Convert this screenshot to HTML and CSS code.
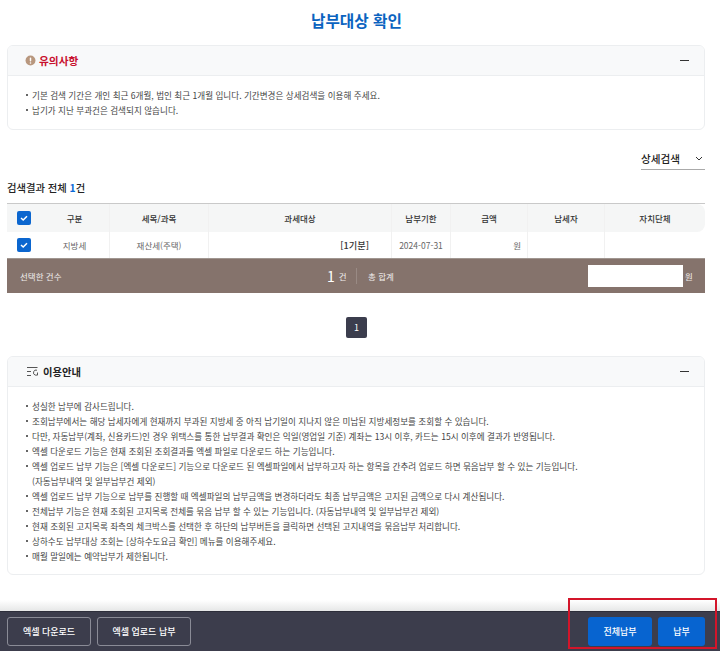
FILE: index.html
```html
<!DOCTYPE html>
<html lang="ko">
    <head>
        <meta charset="utf-8">
        <meta name="viewport" content="width=device-width, initial-scale=1.0">
        <title>납부대상 확인</title>
        <link rel="stylesheet" href="styles.css">
    </head>
    <body>
        <div class="page">
            <h1 class="title">납부대상 확인</h1>

            <div class="panel notice">
                <div class="panel-head">
                    <div class="panel-title red">
                        <svg class="icon" viewBox="0 0 12 12"><circle cx="6" cy="6" r="5.4" fill="#b8977e"/><rect x="5.2" y="2.6" width="1.6" height="4.4" rx=".7" fill="#fff"/><circle cx="6" cy="8.7" r=".9" fill="#fff"/></svg>
                        유의사항
                    </div>
                    <span class="fold"></span>
                </div>
                <ul class="panel-list">
                    <li>기본 검색 기간은 개인 최근 6개월, 법인 최근 1개월 입니다. 기간변경은 상세검색을 이용해 주세요.</li>
                    <li>납기가 지난 부과건은 검색되지 않습니다.</li>
                </ul>
            </div>

            <div class="search-row">
                <div class="search-toggle">
                    상세검색
                    <svg class="chevron" viewBox="0 0 8 5"><path d="M1 1l3 3 3-3" fill="none" stroke="#333" stroke-width="1"/></svg>
                </div>
            </div>

            <h2 class="result-title">검색결과 전체 <b>1</b>건</h2>

            <div class="table">
                <div class="row head">
                    <div class="cell"><span class="check"><svg viewBox="0 0 10 8"><path d="M2 4l2.2 2L8 2.2" fill="none" stroke="#fff" stroke-width="1.5"/></svg></span></div>
                    <div class="cell">구분</div>
                    <div class="cell">세목/과목</div>
                    <div class="cell">과세대상</div>
                    <div class="cell">납부기한</div>
                    <div class="cell">금액</div>
                    <div class="cell">납세자</div>
                    <div class="cell">자치단체</div>
                </div>
                <div class="row body">
                    <div class="cell"><span class="check"><svg viewBox="0 0 10 8"><path d="M2 4l2.2 2L8 2.2" fill="none" stroke="#fff" stroke-width="1.5"/></svg></span></div>
                    <div class="cell">지방세</div>
                    <div class="cell">재산세(주택)</div>
                    <div class="cell right dark">[1기분]</div>
                    <div class="cell">2024-07-31</div>
                    <div class="cell right">원</div>
                    <div class="cell"></div>
                    <div class="cell"></div>
                </div>
                <div class="total">
                    <span class="total-label">선택한 건수</span>
                    <span class="total-count"><b>1</b> 건</span>
                    <span class="total-sum">총 합계</span>
                    <span class="total-input"></span>
                    <span class="total-unit">원</span>
                </div>
            </div>

            <div class="pager"><span class="page-no">1</span></div>

            <div class="panel guide">
                <div class="panel-head">
                    <div class="panel-title">
                        <svg class="icon guide-icon" viewBox="0 0 11 9"><path d="M0 .5h10.500M0 4.500h4M0 8.500h4" fill="none" stroke="#555" stroke-width="1"/><path d="M10 3.200A2.600 2.600 0 1 0 8.200 8.100H10.500V5.500" fill="none" stroke="#555" stroke-width="1"/></svg>
                        이용안내
                    </div>
                    <span class="fold"></span>
                </div>
                <ul class="panel-list">
                    <li>성실한 납부에 감사드립니다.</li>
                    <li>조회납부에서는 해당 납세자에게 현재까지 부과된 지방세 중 아직 납기일이 지나지 않은 미납된 지방세정보를 조회할 수 있습니다.</li>
                    <li>다만, 자동납부(계좌, 신용카드)인 경우 위택스를 통한 납부결과 확인은 익일(영업일 기준) 계좌는 13시 이후, 카드는 15시 이후에 결과가 반영됩니다.</li>
                    <li>엑셀 다운로드 기능은 현재 조회된 조회결과를 엑셀 파일로 다운로드 하는 기능입니다.</li>
                    <li>엑셀 업로드 납부 기능은 [엑셀 다운로드] 기능으로 다운로드 된 엑셀파일에서 납부하고자 하는 항목을 간추려 업로드 하면 묶음납부 할 수 있는 기능입니다.<br>(자동납부내역 및 일부납부건 제외)</li>
                    <li>엑셀 업로드 납부 기능으로 납부를 진행할 때 엑셀파일의 납부금액을 변경하더라도 최종 납부금액은 고지된 금액으로 다시 계산됩니다.</li>
                    <li>전체납부 기능은 현재 조회된 고지목록 전체를 묶음 납부 할 수 있는 기능입니다. (자동납부내역 및 일부납부건 제외)</li>
                    <li>현재 조회된 고지목록 좌측의 체크박스를 선택한 후 하단의 납부버튼을 클릭하면 선택된 고지내역을 묶음납부 처리합니다.</li>
                    <li>상하수도 납부대상 조회는 [상하수도요금 확인] 메뉴를 이용해주세요.</li>
                    <li>매월 말일에는 예약납부가 제한됩니다.</li>
                </ul>
            </div>
        </div>

        <div class="fade"></div>
        <div class="footer">
            <div class="footer-left">
                <button class="btn-line excel-down">엑셀 다운로드</button>
                <button class="btn-line">엑셀 업로드 납부</button>
            </div>
            <div class="footer-right">
                <button class="btn-blue all">전체납부</button>
                <button class="btn-blue pay">납부</button>
            </div>
        </div>
        <div class="mark"></div>
    </body>
</html>
```

FILE: styles.css
```css
*{
    margin: 0;
    padding: 0;
    box-sizing: border-box;
}
html, body{
    height: 651px;
    overflow: hidden;
}
body{
    position: relative;
    background-color: #fff;
    font-family: "Noto Sans CJK KR", "Noto Sans", sans-serif;
    color: #333;
}
.page{
    height: 600px;
    padding: 10px 15px 0 7px;
}
.title{
    height: 21px;
    line-height: 21px;
    padding-left: 1px;
    font-size: 15.7px;
    font-weight: 700;
    color: #0b63c0;
    text-align: center;
}
.panel{
    border: 1px solid #eceef0;
    border-radius: 6px;
    overflow: hidden;
}
.notice{
    margin-top: 14px;
    width: 698px;
    height: 85px;
}
.panel-head{
    height: 30px;
    display: flex;
    align-items: center;
    justify-content: space-between;
    padding: 0 15px 0 17px;
    background-color: #f8f9fa;
    border-bottom: 1px solid #eceef0;
}
.panel-title{
    display: flex;
    align-items: center;
    gap: 3px;
    font-size: 10.7px;
    font-weight: 700;
    color: #222;
}
.red{
    color: #c8102e;
}
.icon{
    width: 11px;
    height: 11px;
}
.guide-icon{
    width: 11px;
    height: 9px;
    margin-left: 2px;
    margin-right: 2px;
}
.fold{
    width: 9px;
    height: 1px;
    background-color: #333;
}
.panel-list{
    list-style: none;
    padding: 12px 17px 8px;
    font-size: 8.58px;
    line-height: 15px;
    color: #444;
}
.panel-list li{
    position: relative;
    padding-left: 7px;
}
.panel-list li::before{
    content: "";
    position: absolute;
    left: 1px;
    top: 6px;
    width: 2px;
    height: 2px;
    border-radius: 50%;
    background-color: #333;
}
.search-row{
    display: flex;
    justify-content: flex-end;
    margin-top: 17px;
}
.search-toggle{
    width: 64px;
    height: 23px;
    display: flex;
    align-items: center;
    justify-content: space-between;
    padding-right: 2px;
    border-bottom: 1px solid #aaa;
    font-size: 10.6px;
    font-weight: 500;
    color: #222;
}
.chevron{
    width: 8px;
    height: 5px;
}
.result-title{
    margin-top: 10px;
    height: 16px;
    line-height: 16px;
    font-size: 10.3px;
    font-weight: 500;
    color: #222;
}
.result-title b{
    font-weight: 700;
    color: #0a6ad6;
}
.table{
    margin-top: 7px;
    width: 698px;
    border-top: 1px solid #c9c9c9;
}
.row{
    display: grid;
    grid-template-columns: 33px 70px 99px 183px 59px 77px 77px 100px;
    font-size: 8.5px;
}
.head{
    height: 28px;
    background-color: #f5f6f6;
    font-weight: 500;
    color: #333;
    border-radius: 0 8px 8px 0;
}
.body{
    height: 26px;
    color: #666;
}
.cell{
    display: flex;
    align-items: center;
    justify-content: center;
    border-right: 1px solid #f1f1f1;
}
.cell:first-child, .cell:last-child{
    border-right: 0;
}
.cell.right{
    justify-content: flex-end;
    padding-right: 6px;
}
.cell.dark{
    padding-right: 22px;
    color: #333;
    font-size: 9.2px;
    font-weight: 500;
}
.check{
    width: 14px;
    height: 14px;
    display: flex;
    align-items: center;
    justify-content: center;
    border-radius: 2px;
    background-color: #0b66cf;
}
.check svg{
    width: 10px;
    height: 8px;
}
.total{
    height: 35px;
    display: flex;
    align-items: center;
    background-color: #85736c;
    color: #f1eeec;
    font-size: 8.5px;
    border-top: 1px solid #a09690;
}
.total-label{
    width: 314px;
    padding-left: 13px;
}
.total-count{
    width: 36px;
    height: 16px;
    display: flex;
    align-items: center;
    gap: 4px;
    padding-left: 6px;
    border-right: 1px solid #998a84;
}
.total-count b{
    font-size: 14px;
    font-weight: 400;
    color: #fff;
}
.total-sum{
    width: 231px;
    padding-left: 11px;
}
.total-input{
    width: 95px;
    height: 22px;
    background-color: #fff;
}
.total-unit{
    margin-left: 2px;
}
.pager{
    width: 698px;
    margin-top: 24px;
    display: flex;
    justify-content: center;
}
.page-no{
    width: 21px;
    height: 21px;
    margin-left: 1px;
    display: flex;
    align-items: center;
    justify-content: center;
    border-radius: 2px;
    background-color: #3b3d4d;
    color: #fff;
    font-size: 9px;
}
.guide{
    margin-top: 18px;
    width: 698px;
    height: 219px;
}
.guide .panel-title{
    font-size: 10.3px;
}
.fade{
    height: 11px;
    background: linear-gradient(#fff, #e6e7e7);
}
.footer{
    height: 40px;
    display: flex;
    align-items: center;
    justify-content: space-between;
    padding: 0 15px 0 7px;
    background-color: #3c3d4c;
    border-top: 1px solid #2d2e3a;
}
.footer-left, .footer-right{
    display: flex;
    gap: 6px;
}
.btn-line, .btn-blue{
    height: 29px;
    border-radius: 3px;
    color: #fff;
    font-family: inherit;
    font-size: 9px;
    font-weight: 500;
}
.btn-line{
    width: 94px;
    background-color: transparent;
    border: 1px solid #8a8b96;
}
.excel-down{
    width: 84px;
}
.btn-blue{
    background-color: #0764d0;
    border: 0;
}
.all{
    width: 64px;
}
.pay{
    width: 47px;
}
.mark{
    position: absolute;
    left: 568px;
    top: 598px;
    width: 149px;
    height: 51px;
    border: 2px solid #d3152a;
}
```
